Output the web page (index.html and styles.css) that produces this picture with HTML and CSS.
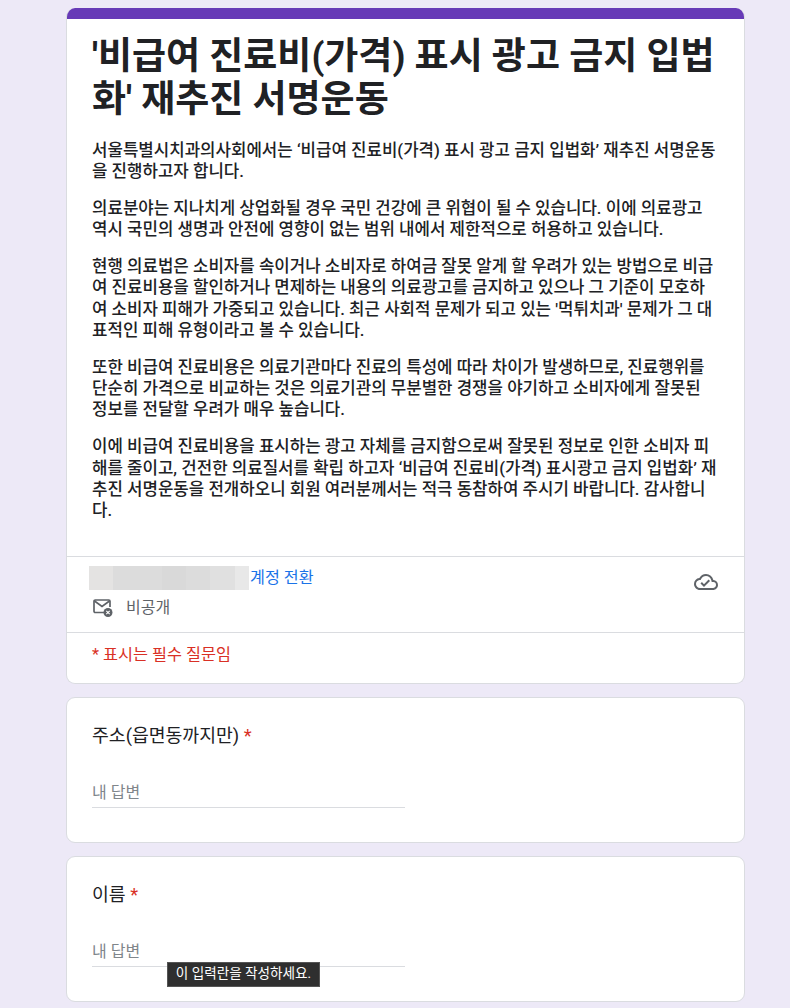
FILE: index.html
```html
<!DOCTYPE html>
<html lang="ko">
<head>
<meta charset="utf-8">
<title>서명운동</title>
<link rel="stylesheet" href="styles.css">
</head>
<body>
<main class="form">
  <section class="card head-card">
    <div class="band"></div>
    <div class="intro">
      <h1 class="title">'비급여 진료비(가격) 표시 광고 금지 입법<br>화' 재추진 서명운동</h1>
      <div class="desc">
        <p>서울특별시치과의사회에서는 ‘비급여 진료비(가격) 표시 광고 금지 입법화’ 재추진 서명운동<br>을 진행하고자 합니다.</p>
        <p>의료분야는 지나치게 상업화될 경우 국민 건강에 큰 위협이 될 수 있습니다. 이에 의료광고<br>역시 국민의 생명과 안전에 영향이 없는 범위 내에서 제한적으로 허용하고 있습니다.</p>
        <p>현행 의료법은 소비자를 속이거나 소비자로 하여금 잘못 알게 할 우려가 있는 방법으로 비급<br>여 진료비용을 할인하거나 면제하는 내용의 의료광고를 금지하고 있으나 그 기준이 모호하<br>여 소비자 피해가 가중되고 있습니다. 최근 사회적 문제가 되고 있는 '먹튀치과' 문제가 그 대<br>표적인 피해 유형이라고 볼 수 있습니다.</p>
        <p>또한 비급여 진료비용은 의료기관마다 진료의 특성에 따라 차이가 발생하므로, 진료행위를<br>단순히 가격으로 비교하는 것은 의료기관의 무분별한 경쟁을 야기하고 소비자에게 잘못된<br>정보를 전달할 우려가 매우 높습니다.</p>
        <p>이에 비급여 진료비용을 표시하는 광고 자체를 금지함으로써 잘못된 정보로 인한 소비자 피<br>해를 줄이고, 건전한 의료질서를 확립 하고자 ‘비급여 진료비(가격) 표시광고 금지 입법화’ 재<br>추진 서명운동을 전개하오니 회원 여러분께서는 적극 동참하여 주시기 바랍니다. 감사합니<br>다.</p>
      </div>
    </div>
    <div class="account">
      <div class="account-main">
        <div class="account-row">
          <div class="blur">
            <span class="b1"></span><span class="b2"></span><span class="b3"></span><span class="b4"></span><span class="b5"></span><span class="b6"></span>
          </div>
          <a class="switch" href="#">계정 전환</a>
        </div>
        <div class="private-row">
          <svg class="mail" viewBox="0 0 22 20" width="22" height="20" aria-hidden="true">
            <path d="M12 14.500H3.200c-.7 0-1.200-.5-1.200-1.200V3.200C2 2.500 2.500 2 3.200 2h13.600c.7 0 1.200.5 1.200 1.200V9" fill="none" stroke="#5f6368" stroke-width="1.700"/>
            <path d="M2.500 3l7.500 5.500L17.500 3" fill="none" stroke="#5f6368" stroke-width="1.700"/>
            <circle cx="16" cy="14.500" r="4.500" fill="#5f6368"/>
            <path d="M14.300 12.800l3.400 3.400M17.700 12.800l-3.400 3.400" stroke="#fff" stroke-width="1.100"/>
          </svg>
          <span class="private">비공개</span>
        </div>
      </div>
      <svg class="cloud" viewBox="0 0 24 24" width="24" height="24" aria-hidden="true">
        <path d="M19.350 10.040A7.490 7.490 0 0 0 12 4C9.110 4 6.600 5.640 5.350 8.040A5.994 5.994 0 0 0 0 14c0 3.310 2.690 6 6 6h13c2.760 0 5-2.240 5-5 0-2.640-2.050-4.780-4.650-4.960zM19 18H6c-2.210 0-4-1.790-4-4 0-2.050 1.530-3.760 3.560-3.970l1.070-.11.500-.95A5.469 5.469 0 0 1 12 6c2.620 0 4.880 1.860 5.390 4.430l.3 1.500 1.530.11A2.980 2.980 0 0 1 22 15c0 1.650-1.350 3-3 3zm-9-3.820L7.910 12.090 6.500 13.500 10 17l6.010-6.010-1.410-1.410z" fill="#5f6368"/>
      </svg>
    </div>
    <div class="required-note">* 표시는 필수 질문임</div>
  </section>

  <section class="card question">
    <div class="label">주소(읍면동까지만) <span class="star">*</span></div>
    <div class="answer">내 답변</div>
  </section>

  <section class="card question name-card">
    <div class="label">이름 <span class="star">*</span></div>
    <div class="answer">내 답변</div>
    <div class="tooltip">이 입력란을 작성하세요.</div>
  </section>
</main>
</body>
</html>
```
FILE: styles.css
```css
* { box-sizing: border-box; }
html, body { margin: 0; height: 1008px; overflow: hidden; }
body {
  background: #ede9f7;
  font-family: "Roboto", "Noto Sans CJK KR", sans-serif;
  color: #202124;
}
.form {
  width: 679px;
  margin-left: 66px;
  padding-top: 8px;
  display: flex;
  flex-direction: column;
  gap: 13px;
}
.card {
  background: #fff;
  border: 1px solid #dadce0;
  border-radius: 9px;
}
.head-card { overflow: hidden; border-top: 0; height: 676px; }
.band { height: 11px; background: #673ab7; }
.intro { padding: 16px 25px 0; height: 537px; }
.title {
  margin: 0;
  font-size: 37px;
  font-weight: 700;
  line-height: 43px;
  white-space: nowrap;
}
.desc {
  margin-top: 19px;
  font-size: 16.800px;
  font-weight: 500;
  line-height: 21.300px;
  white-space: nowrap;
}
.desc p { margin: 0 0 15.500px; }
.account {
  border-top: 1px solid #dadce0;
  height: 76px;
  padding: 7px 26px 0 22px;
  display: flex;
  justify-content: space-between;
}
.account-main { display: flex; flex-direction: column; }
.account-row { display: flex; align-items: center; height: 26px; }
.blur { display: flex; width: 160px; height: 24px; margin-top: 2px; }
.b1 { flex: 24px; background: #e4e3e2; }
.b2 { flex: 49px; background: #dcdcdc; }
.b3 { flex: 24px; background: #d9d9d9; }
.b4 { flex: 24px; background: #dcdcdc; }
.b5 { flex: 25px; background: #e0e0e0; }
.b6 { flex: 14px; background: #e8e8e8; }
.switch {
  color: #1a73e8;
  text-decoration: none;
  font-size: 16.200px;
  margin-left: 1px;
  margin-top: -3px;
}
.private-row { display: flex; align-items: center; margin-top: 7px; padding-left: 3px; }
.private { font-size: 16px; color: #5f6368; margin-left: 12px; margin-top: -3px; }
.cloud { margin-top: 6px; }
.required-note {
  border-top: 1px solid #dadce0;
  padding: 11px 25px 0;
  color: #d93025;
  font-size: 16.300px;
  line-height: 22px;
}
.question { height: 146px; padding: 26px 25px 0; position: relative; }
.label { font-size: 18.300px; line-height: 24px; }
.star { color: #d93025; }
.answer {
  width: 313px;
  margin-top: 22px;
  padding: 13px 0 4px;
  color: #80868b;
  font-size: 16px;
  line-height: 20px;
  border-bottom: 1px solid #dadce0;
}
.tooltip {
  position: absolute;
  left: 100px;
  top: 105px;
  width: 153px;
  height: 25px;
  background: #2f2f2f;
  border: 1px solid #555;
  color: #fff;
  font-size: 13.600px;
  line-height: 20px;
  text-align: center;
  white-space: nowrap;
}
```
